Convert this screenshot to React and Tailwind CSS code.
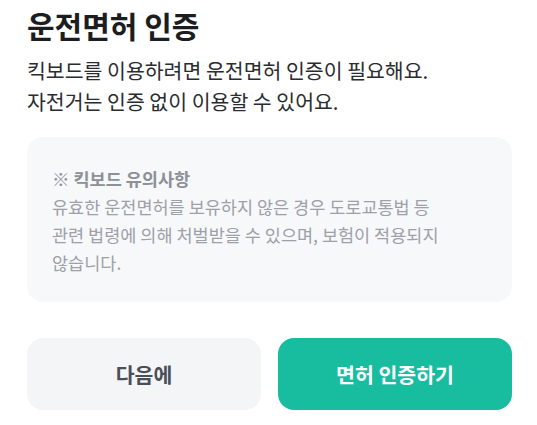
export default function App() {
  return (
    <div
      className="w-[537px] h-[425px] bg-white pl-[27px] pr-[25px] pt-[6px] overflow-hidden"
      style={{ fontFamily: '"Noto Sans CJK KR", "Noto Sans", sans-serif' }}
    >
      <h1 className="text-[30px] leading-[38px] font-bold text-[#1b1d21]">
        운전면허 인증
      </h1>
      <p className="mt-[11px] text-[20.5px] leading-[31px] text-[#2a2c30]">
        킥보드를 이용하려면 운전면허 인증이 필요해요.
        <br />
        자전거는 인증 없이 이용할 수 있어요.
      </p>

      <div className="mt-[20px] rounded-2xl bg-[#f7f8fa] pl-[25px] pr-[20px] pt-[28px] pb-[25px]">
        <p className="text-[17.5px] leading-[28px] font-bold text-[#8c9097]">※ 킥보드 유의사항</p>
        <p className="text-[17.5px] leading-[28px] text-[#9da0a7]">
          유효한 운전면허를 보유하지 않은 경우 도로교통법 등
          <br />
          관련 법령에 의해 처벌받을 수 있으며, 보험이 적용되지
          <br />
          않습니다.
        </p>
      </div>

      <div className="mt-[36px] flex gap-[17px]">
        <button className="flex-1 h-[72px] rounded-2xl bg-[#f4f5f7] text-[20.5px] font-bold text-[#4a4e56]">
          다음에
        </button>
        <button className="flex-1 h-[72px] rounded-2xl bg-[#18bc9f] text-[20.5px] font-bold text-white">
          면허 인증하기
        </button>
      </div>
    </div>
  );
}
